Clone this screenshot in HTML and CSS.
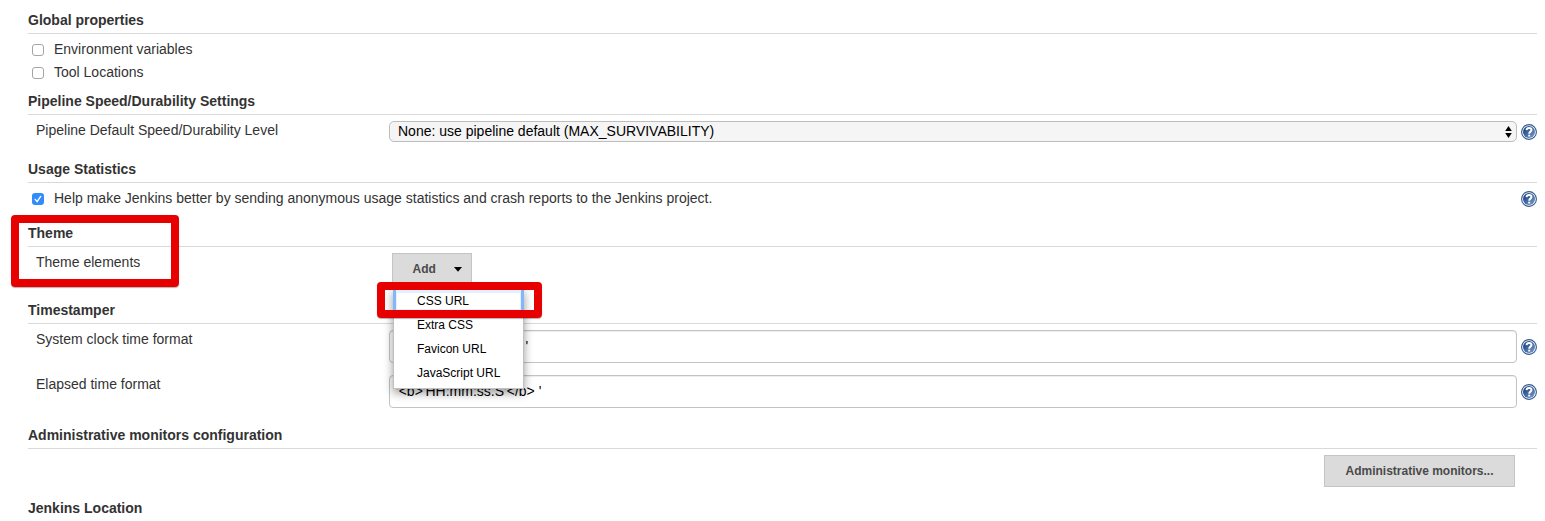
FILE: index.html
```html
<!DOCTYPE html>
<html lang="en">
<head>
<meta charset="utf-8">
<title>Configure System</title>
<link rel="stylesheet" href="styles.css">
</head>
<body>
<svg class="defs" aria-hidden="true">
  <defs>
    <linearGradient id="help-fill" x1="0" y1="0" x2="1" y2="1">
      <stop offset="0.2" stop-color="#214a87"/>
      <stop offset="1" stop-color="#7c9fce"/>
    </linearGradient>
    <symbol id="help" viewBox="0 0 16 16">
      <circle cx="8" cy="8" r="7.4" fill="#fff" stroke="#33568f" stroke-width="1.1"/>
      <circle cx="8" cy="8" r="6" fill="url(#help-fill)"/>
      <path d="M5.5 6.1C5.7 3.3 10.5 3.3 10.5 6.1C10.5 7.8 8.2 7.5 8.2 9.8" fill="none" stroke="#fff" stroke-width="1.9"/>
      <rect x="7.2" y="10.7" width="2" height="1.8" fill="#fff"/>
    </symbol>
  </defs>
</svg>
<main class="form">
  <section class="section global">
    <h2>Global properties</h2>
    <label class="check"><i class="box"></i><span>Environment variables</span></label>
    <label class="check"><i class="box"></i><span>Tool Locations</span></label>
  </section>
  <section class="section pipeline">
    <h2>Pipeline Speed/Durability Settings</h2>
    <div class="row">
      <span class="name">Pipeline Default Speed/Durability Level</span>
      <div class="select"><span>None: use pipeline default (MAX_SURVIVABILITY)</span>
        <svg class="arrows" viewBox="0 0 7 12"><path d="M3.5 0L6.8 5H.2zM3.5 12L6.8 7H.2z"/></svg>
      </div>
      <svg class="help"><use href="#help"/></svg>
    </div>
  </section>
  <section class="section usage">
    <h2>Usage Statistics</h2>
    <div class="check"><i class="box on"><svg viewBox="0 0 12 12"><path d="M3.2 6.4L5.1 8.6L8.7 3.4"/></svg></i><span>Help make Jenkins better by sending anonymous usage statistics and crash reports to the Jenkins project.</span>
      <svg class="help"><use href="#help"/></svg>
    </div>
  </section>
  <section class="section theme">
    <h2>Theme</h2>
    <div class="row">
      <span class="name">Theme elements</span>
      <div class="dropdown">
        <div class="button add"><span>Add</span><svg class="caret" viewBox="0 0 8 5"><path d="M0 0H8L4 4.7z"/></svg></div>
        <ul class="menu">
          <li class="focused">CSS URL</li>
          <li>Extra CSS</li>
          <li>Favicon URL</li>
          <li>JavaScript URL</li>
        </ul>
        <div class="frame frame-menu"></div>
      </div>
    </div>
    <div class="frame frame-theme"></div>
  </section>
  <section class="section stamper">
    <h2>Timestamper</h2>
    <div class="row">
      <span class="name">System clock time format</span>
      <div class="input">'&lt;b&gt;'HH:mm:ss'&lt;/b&gt; '</div>
      <svg class="help"><use href="#help"/></svg>
    </div>
    <div class="row">
      <span class="name">Elapsed time format</span>
      <div class="input">'&lt;b&gt;'HH:mm:ss.S'&lt;/b&gt; '</div>
      <svg class="help"><use href="#help"/></svg>
    </div>
  </section>
  <section class="section monitors">
    <h2>Administrative monitors configuration</h2>
    <div class="actions"><div class="button admin">Administrative monitors...</div></div>
  </section>
  <section class="section">
    <h2>Jenkins Location</h2>
  </section>
</main>
</body>
</html>
```
FILE: styles.css
```css
* { box-sizing: border-box; }
html { overflow: hidden; }
body {
  margin: 0;
  height: 521px;
  overflow: hidden;
  background: #fff;
  color: #333;
  font: 14px/16px "Liberation Sans", Arial, sans-serif;
  white-space: nowrap;
}
.defs { position: absolute; width: 0; height: 0; }
.form { padding: 8px 8px 0 28px; }
.section { position: relative; }
.global { height: 81px; }
.pipeline { height: 68px; }
.usage { height: 64px; }
.theme { height: 77px; }
.stamper { height: 125px; }
.monitors { height: 73px; }
h2 {
  margin: 0;
  height: 26px;
  padding-top: 4px;
  border-bottom: 1px solid #d9d9d9;
  font-size: 14px;
  line-height: 16px;
}
.check {
  display: flex;
  align-items: center;
  height: 23px;
  padding-left: 4px;
}
.global h2, .usage h2 { margin-bottom: 4px; }
.check span { margin-top: -1px; }
.box {
  width: 12px;
  height: 12px;
  margin: 1px 10px 0 0;
  border: 1px solid #a5a5a5;
  border-radius: 3px;
  background: #fff;
}
.box.on { border: 0; background: #2f8cf8; }
.box svg { display: block; width: 12px; height: 12px; }
.box path { fill: none; stroke: #fff; stroke-width: 1.4; stroke-linecap: round; }
.help { width: 16px; height: 16px; flex: none; }
.check .help { margin: 0 0 0 auto; }
.row {
  display: grid;
  grid-template-columns: 349px 1128px 16px;
  column-gap: 4px;
  padding-left: 8px;
}
.name { padding-top: 7px; }
.select {
  display: flex;
  align-items: center;
  justify-content: space-between;
  height: 21px;
  margin-top: 6px;
  padding: 0 4px 0 8px;
  border: 1px solid #bdbdbd;
  border-radius: 5px;
  background: #f5f5f5;
  color: #000;
}
.select span { margin-top: -2px; }
.arrows { width: 7px; height: 12px; }
.pipeline .help { margin-top: 9px; }
.dropdown { position: relative; padding: 6px 0 0 3px; }
.button {
  display: flex;
  align-items: center;
  height: 32px;
  border: 1px solid #c4c4c4;
  background: #dbdbdb;
  color: #4a4a4a;
  font-size: 12px;
  font-weight: bold;
}
.add { width: 80px; padding-left: 19.6px; gap: 18.4px; }
.caret { width: 8px; height: 5px; fill: #000; }
.menu {
  position: absolute;
  z-index: 2;
  left: 4px;
  top: 41px;
  width: 131px;
  margin: 0;
  padding: 0 0 3px;
  list-style: none;
  border: 1px solid #c0c0c0;
  background: #fff;
  box-shadow: 0 4px 9px rgba(0, 0, 0, .4);
  color: #000;
  font-size: 12px;
  line-height: 24px;
}
.menu li { height: 24px; padding-left: 23px; }
.menu .focused {
  margin: 0 -1px;
  padding-left: 24px;
  box-shadow: inset 3px 0 #83b7fb, inset -3px 0 #83b7fb, inset 0 0 0 4px #e6f1ff;
}
.frame {
  position: absolute;
  z-index: 3;
  border: 8px solid #e60000;
  border-radius: 4px;
  box-shadow: 0 1px 1px rgba(0, 0, 0, .3);
}
.frame-menu { left: -12px; top: 35px; width: 165px; height: 36px; }
.frame-theme { left: -17px; top: -6px; width: 168px; height: 72px; }
.stamper .row { height: 45px; }
.input {
  height: 33px;
  margin-top: 6px;
  padding: 7px 6px;
  border: 1px solid #c3c3c3;
  border-radius: 4px;
  box-shadow: inset 0 1px 1px rgba(0, 0, 0, .075);
  color: #000;
}
.stamper .help { margin-top: 15px; }
.actions { display: flex; justify-content: flex-end; padding: 6px 22px 0 0; }
.admin { width: 191px; justify-content: center; }
```
